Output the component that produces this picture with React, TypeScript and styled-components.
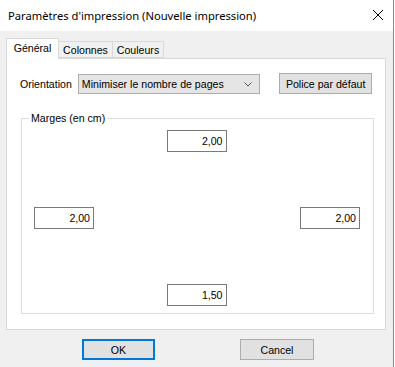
import React, { useState } from 'react'
import styled, { createGlobalStyle } from 'styled-components'

const GlobalStyle = createGlobalStyle`
  html, body {
    margin: 0;
    padding: 0;
    background: #ffffff;
  }
  * { box-sizing: border-box; }
`

const Window = styled.div`
  width: 394px;
  height: 367px;
  background: #f0f0f0;
  border-right: 1px solid #8a8a8a;
  display: flex;
  flex-direction: column;
  font-family: "Liberation Sans", Arial, sans-serif;
  font-size: 10.6px;
  color: #000;
`

const TitleBar = styled.div`
  height: 31px;
  background: #ffffff;
  display: flex;
  align-items: center;
  justify-content: space-between;
  padding: 0 9px 1px 8px;
`

const Title = styled.span`
  font-family: "Noto Sans", "Open Sans", sans-serif;
  font-size: 11.2px;
  color: #000;
`

const CloseButton = styled.div`
  width: 12px;
  height: 12px;
  display: flex;
  align-items: center;
  justify-content: center;
`

const TabStrip = styled.div`
  display: flex;
  align-items: flex-end;
  height: 27px;
  padding: 7px 0 0 6px;
`

const Tab = styled.div<{ $active?: boolean; $w: number }>`
  position: relative;
  width: ${p => p.$w}px;
  height: ${p => (p.$active ? 21 : 17)}px;
  margin-bottom: ${p => (p.$active ? -1 : 0)}px;
  margin-left: ${p => (p.$active ? 0 : -1)}px;
  background: ${p => (p.$active ? '#ffffff' : '#f0f0f0')};
  border: 1px solid #d9d9d9;
  border-bottom: ${p => (p.$active ? 'none' : '1px solid #d9d9d9')};
  z-index: ${p => (p.$active ? 2 : 1)};
  display: flex;
  align-items: ${p => (p.$active ? 'flex-start' : 'center')};
  justify-content: center;
  padding-top: ${p => (p.$active ? 3 : 0)}px;
  &:first-child { margin-left: 0; }
`

const Panel = styled.div`
  margin: 0 7px 0 6px;
  height: 272px;
  background: #ffffff;
  border: 1px solid #d9d9d9;
  padding: 14px 13px 0 13px;
  display: flex;
  flex-direction: column;
`

const Row = styled.div`
  display: flex;
  align-items: center;
  height: 21px;
`

const Label = styled.span`
  width: 58px;
`

const Combo = styled.div`
  width: 183px;
  height: 20px;
  margin-top: 1px;
  background: #e5e5e5;
  border: 1px solid #adadad;
  display: flex;
  align-items: center;
  justify-content: space-between;
  padding: 0 7px 0 3px;
`

const Button = styled.button<{ $w: number; $default?: boolean }>`
  width: ${p => p.$w}px;
  height: 21px;
  font-family: "Liberation Sans", Arial, sans-serif;
  font-size: 10.6px;
  color: #000;
  background: #e1e1e1;
  border: ${p => (p.$default ? '2px solid #0078d7' : '1px solid #adadad')};
  padding: 0;
  margin: 0;
`

const GroupBox = styled.div`
  position: relative;
  margin: 24px 0 0 1px;
  width: 353px;
  height: 196px;
  border: 1px solid #dcdcdc;
  padding: 11px 13px 7px 12px;
  display: flex;
  flex-direction: column;
  justify-content: space-between;
`

const Legend = styled.span`
  position: absolute;
  top: -8px;
  left: 7px;
  padding: 0 2px;
  background: #ffffff;
  line-height: 14px;
`

const MarginRow = styled.div<{ $spread?: boolean }>`
  display: flex;
  justify-content: ${p => (p.$spread ? 'space-between' : 'center')};
  padding-right: ${p => (p.$spread ? 0 : 1)}px;
`

const NumberInput = styled.input`
  width: 60px;
  height: 22px;
  border: 1px solid #7a7a7a;
  font-family: "Liberation Sans", Arial, sans-serif;
  font-size: 10.6px;
  color: #000;
  text-align: right;
  padding: 0 3px 0 2px;
  margin: 0;
  outline: none;
  background: #fff;
`

const Footer = styled.div`
  display: flex;
  padding: 9px 0 0 82px;
  gap: 85px;
`

function App() {
  const [top, setTop] = useState('2,00')
  const [left, setLeft] = useState('2,00')
  const [right, setRight] = useState('2,00')
  const [bottom, setBottom] = useState('1,50')

  return (
    <>
      <GlobalStyle />
      <Window>
        <TitleBar>
          <Title>Paramètres d'impression (Nouvelle impression)</Title>
          <CloseButton>
            <svg width="12" height="12" viewBox="0 0 12 12">
              <path d="M1 1 L11 11 M11 1 L1 11" stroke="#000" strokeWidth="1" fill="none" />
            </svg>
          </CloseButton>
        </TitleBar>

        <TabStrip>
          <Tab $active $w={53}>Général</Tab>
          <Tab $w={55}>Colonnes</Tab>
          <Tab $w={52}>Couleurs</Tab>
        </TabStrip>

        <Panel>
          <Row>
            <Label>Orientation</Label>
            <Combo>
              <span>Minimiser le nombre de pages</span>
              <svg width="8" height="5" viewBox="0 0 8 5">
                <path d="M0.5 0.5 L4 4 L7.5 0.5" stroke="#555" strokeWidth="1" fill="none" />
              </svg>
            </Combo>
            <Button $w={93} style={{ marginLeft: 19 }}>Police par défaut</Button>
          </Row>

          <GroupBox>
            <Legend>Marges (en cm)</Legend>
            <MarginRow>
              <NumberInput value={top} onChange={e => setTop(e.target.value)} />
            </MarginRow>
            <MarginRow $spread>
              <NumberInput value={left} onChange={e => setLeft(e.target.value)} />
              <NumberInput value={right} onChange={e => setRight(e.target.value)} />
            </MarginRow>
            <MarginRow>
              <NumberInput value={bottom} onChange={e => setBottom(e.target.value)} />
            </MarginRow>
          </GroupBox>
        </Panel>

        <Footer>
          <Button $w={73} $default>OK</Button>
          <Button $w={74}>Cancel</Button>
        </Footer>
      </Window>
    </>
  )
}

export default App
